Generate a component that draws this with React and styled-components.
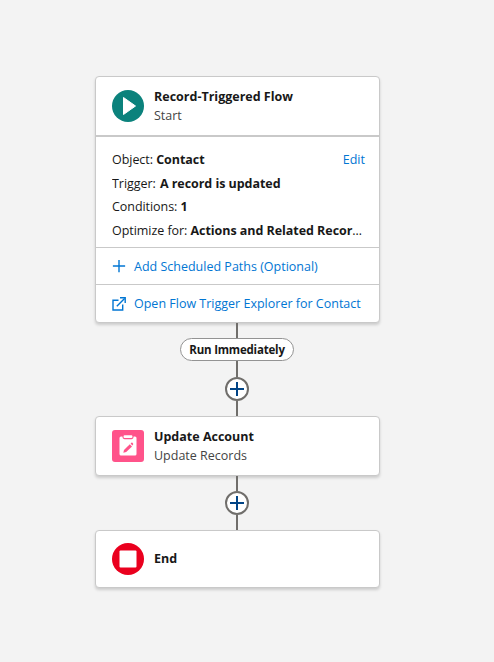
import styled, { createGlobalStyle } from "styled-components";

const GlobalStyle = createGlobalStyle`
    html, body {
        margin: 0;
        padding: 0;
        background-color: #f3f3f3;
    }

    body {
        font-family: "Open Sans", "Noto Sans", "Liberation Sans", sans-serif;
        font-size: 12.5px;
        color: #181818;
    }
`;

const StartIcon = () => (
    <svg width="32" height="32" viewBox="0 0 32 32">
        <circle cx="16" cy="16" r="16" fill="#0b827c" />
        <path d="M11.5 7.5 L23.5 16 L11.5 24.5 Z" fill="#fff" stroke="#fff" strokeWidth="1" strokeLinejoin="round" />
    </svg>
);

const UpdateIcon = () => (
    <svg width="32" height="32" viewBox="0 0 32 32">
        <rect width="32" height="32" rx="3" fill="#ff538a" />
        <path d="M7.5 8 a1.5 1.5 0 0 1 1.5-1.5 H23 a1.5 1.5 0 0 1 1.5 1.5 V24 a1.5 1.5 0 0 1 -1.5 1.5 H9 a1.5 1.5 0 0 1 -1.5-1.5 Z" fill="#fff" />
        <rect x="11" y="4.6" width="10" height="4" rx="1.5" fill="#fff" stroke="#ff538a" strokeWidth="1.1" />
        <path d="M11.3 22.7 L12 20 L17.8 14.3 L20 16.5 L14.2 22 Z" fill="#ff538a" />
        <path d="M18.6 13.5 L19.4 12.8 a.8 .8 0 0 1 1.1 0 L21 13.6 a.8 .8 0 0 1 0 1.1 L20.3 15.5 Z" fill="#ff538a" />
    </svg>
);

const EndIcon = () => (
    <svg width="32" height="32" viewBox="0 0 32 32">
        <circle cx="16" cy="16" r="16" fill="#ea001e" />
        <rect x="7.5" y="7.5" width="17" height="17" rx="1" fill="#fff" />
    </svg>
);

const PlusIcon = ({ color, size, weight }) => (
    <svg width={size} height={size} viewBox="0 0 16 16">
        <path d="M8 1 V15 M1 8 H15" stroke={color} strokeWidth={weight} fill="none" />
    </svg>
);

const ExternalIcon = () => (
    <svg width="14" height="14" viewBox="0 0 14 14" fill="none" stroke="#0176d3" strokeWidth="1.4">
        <path d="M6.5 3.3 H1 V13 H10.7 V7.5" />
        <path d="M4.8 9.2 L12.6 1.4" />
        <path d="M8 .8 H13.2 V6" />
    </svg>
);

const AddButton = () => (
    <AddCircle>
        <PlusIcon color="#014486" size={16} weight={2} />
    </AddCircle>
);

export default function App() {
    return (
        <>
            <GlobalStyle />
            <Canvas>
                <Card>
                    <StartHeader>
                        <StartIcon />
                        <Titles>
                            <Title>Record-Triggered Flow</Title>
                            <Subtitle>Start</Subtitle>
                        </Titles>
                    </StartHeader>

                    <Details>
                        <DetailRow>
                            <DetailText>Object: <strong>Contact</strong></DetailText>
                            <Edit>Edit</Edit>
                        </DetailRow>
                        <DetailRow $height={24}>
                            <DetailText>Trigger: <TriggerValue>A record is updated</TriggerValue></DetailText>
                        </DetailRow>
                        <DetailRow>
                            <DetailText>Conditions: <strong>1</strong></DetailText>
                        </DetailRow>
                        <DetailRow $height={24}>
                            <DetailText>Optimize for: <strong>Actions and Related Records</strong></DetailText>
                        </DetailRow>
                    </Details>

                    <LinkRow $height={36}>
                        <LinkIcon><PlusIcon color="#0176d3" size={14} weight={1.6} /></LinkIcon>
                        <LinkLabel>Add Scheduled Paths (Optional)</LinkLabel>
                    </LinkRow>
                    <LinkRow $height={38}>
                        <LinkIcon><ExternalIcon /></LinkIcon>
                        <LinkLabel>Open Flow Trigger Explorer for Contact</LinkLabel>
                    </LinkRow>
                </Card>

                <Line $height={15} />
                <Pill>Run Immediately</Pill>
                <Line $height={16} />
                <AddButton />
                <Line $height={15} />

                <Card>
                    <NodeRow $height={58}>
                        <UpdateIcon />
                        <Titles>
                            <Title>Update Account</Title>
                            <Subtitle>Update Records</Subtitle>
                        </Titles>
                    </NodeRow>
                </Card>

                <Line $height={15} />
                <AddButton />
                <Line $height={15} />

                <Card>
                    <NodeRow $height={56}>
                        <EndIcon />
                        <Titles>
                            <Title>End</Title>
                        </Titles>
                    </NodeRow>
                </Card>
            </Canvas>
        </>
    );
}

const Canvas = styled.div`
    width: 494px;
    height: 662px;
    padding: 76px 19px 0 0;
    box-sizing: border-box;

    display: flex;
    flex-direction: column;
    align-items: center;

    overflow: hidden;
`;

const Card = styled.div`
    width: 285px;
    box-sizing: border-box;

    border: 1px solid #c9c9c9;
    border-radius: 4px;

    background-color: #fff;
    box-shadow: 0 2px 3px rgba(0, 0, 0, 0.16);
`;

const NodeRow = styled.div`
    height: ${props => props.$height}px;
    padding: 0 16px;

    display: flex;
    align-items: center;

    column-gap: 10px;
`;

const StartHeader = styled(NodeRow).attrs({ $height: 58 })`
    border-bottom: 2px solid #c9c9c9;
`;

const Titles = styled.div`
    display: flex;
    flex-direction: column;

    row-gap: 1px;
`;

const Title = styled.div`
    font-size: 12.5px;
    line-height: 18px;
    font-weight: 700;
    color: #181818;
`;

const Subtitle = styled.div`
    font-size: 12.5px;
    line-height: 17px;
    color: #444;
`;

const Details = styled.div`
    padding: 11px 14px 5px 16px;

    border-bottom: 1px solid #c9c9c9;
`;

const DetailRow = styled.div`
    height: ${props => props.$height || 23}px;
    padding-top: ${props => (props.$height ? 1 : 0)}px;
    box-sizing: border-box;

    display: flex;
    align-items: center;
    justify-content: space-between;

    column-gap: 8px;
`;

const DetailText = styled.div`
    min-width: 0;
    max-width: 251px;

    font-size: 12.5px;
    line-height: 18px;
    letter-spacing: -0.05px;
    color: #181818;

    white-space: nowrap;
    overflow: hidden;
    text-overflow: ellipsis;

    strong {
        font-weight: 700;
    }
`;

const TriggerValue = styled.strong`
    margin-left: 1px;
`;

const Edit = styled.span`
    font-size: 12.5px;
    color: #0176d3;
`;

const LinkRow = styled.div`
    height: ${props => props.$height}px;
    box-sizing: border-box;
    padding: 0 14px 0 16px;

    display: flex;
    align-items: center;

    column-gap: 8px;

    & + & {
        border-top: 1px solid #c9c9c9;
    }
`;

const LinkIcon = styled.span`
    width: 14px;
    height: 14px;

    display: flex;
`;

const LinkLabel = styled.span`
    font-size: 12.5px;
    color: #0176d3;
`;

const Line = styled.div`
    width: 2px;
    height: ${props => props.$height}px;
    margin-right: 1px;

    background-color: #706e6b;
`;

const Pill = styled.div`
    height: 23px;
    width: 114px;
    margin-right: 1px;
    box-sizing: border-box;

    display: flex;
    align-items: center;
    justify-content: center;

    border: 1px solid #939393;
    border-radius: 12px;

    background-color: #fff;

    font-size: 11.5px;
    font-weight: 700;
    letter-spacing: -0.2px;
    color: #181818;
`;

const AddCircle = styled.div`
    width: 24px;
    height: 24px;
    margin-right: 1px;
    box-sizing: border-box;

    display: flex;
    align-items: center;
    justify-content: center;

    border: 2px solid #706e6b;
    border-radius: 50%;

    background-color: #fff;
`;
